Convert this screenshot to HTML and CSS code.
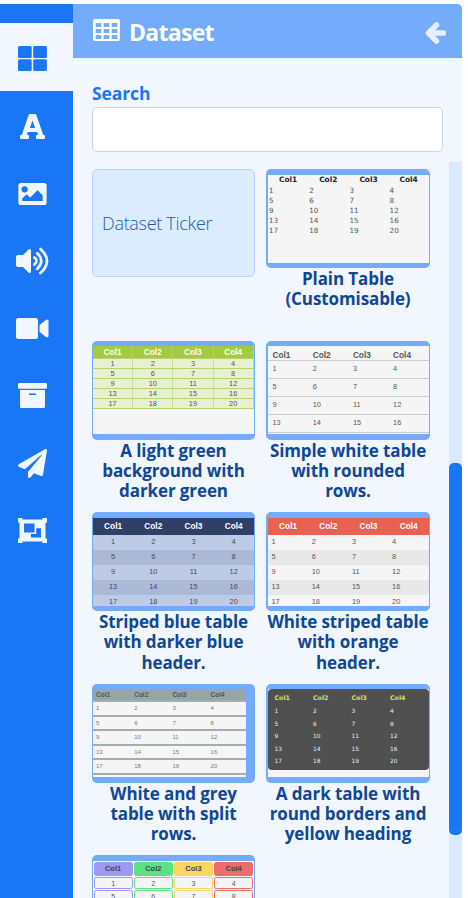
FILE: index.html
```html
<!DOCTYPE html>
<html lang="en">
<head>
<meta charset="utf-8">
<title>Dataset</title>
<link rel="stylesheet" href="styles.css">
</head>
<body>
<div class="app">
  <nav class="sidebar">
    <a class="item active"><svg width="29" height="25" viewBox="0 0 29 25"><rect width="13.7" height="12" rx="1.5"/><rect x="15.2" width="13.7" height="12" rx="1.5"/><rect y="13.2" width="13.7" height="11.8" rx="1.5"/><rect x="15.2" y="13.2" width="13.7" height="11.8" rx="1.5"/></svg></a>
    <a class="item"><svg width="25" height="25" viewBox="0 0 25 25"><path fill-rule="evenodd" d="M10 0h5q1 0 1.4 1l6.8 20H24q1 0 1 1v2q0 1-1 1h-7q-1 0-1-1v-2q0-1 1-1h1l-.8-3H7.800L7 21h1q1 0 1 1v2q0 1-1 1H1q-1 0-1-1v-2q0-1 1-1h.8L8.600 1Q9 0 10 0zm2.500 6.500L9.800 14h5.400z"/></svg></a>
    <a class="item"><svg width="29" height="22" viewBox="0 0 576 448"><path fill-rule="evenodd" d="M528 448H48c-26.500 0-48-21.500-48-48V48C0 21.500 21.500 0 48 0h480c26.500 0 48 21.500 48 48v352c0 26.500-21.500 48-48 48zM128 64a64 64 0 1 0 0 128 64 64 0 1 0 0-128zM80 368h416V256l-96-102c-5-5-12-5-17 0L240 300l-60-62c-5-5-12-5-17 0L80 312z"/></svg></a>
    <a class="item"><svg width="33" height="28" viewBox="0 0 33 28"><path d="M0 10q0-2 2-2h5l5.500-5.500Q15 1 15 4v20q0 3-2.500 1.500L7 20H2q-2 0-2-2z"/><g class="waves"><path d="M18.500 10.500q4 3.500 0 7M21.300 6.300q8 7.700 0 15.400M24.500 2q13 12 0 24"/></g></svg></a>
    <a class="item"><svg width="33" height="21" viewBox="0 0 33 21"><rect width="22" height="21" rx="2.500"/><path d="M23.500 7l6.500-5q2.500-1.300 2.500 1v15q0 2.300-2.500 1l-6.500-5z"/></svg></a>
    <a class="item"><svg width="29" height="25" viewBox="0 0 29 25"><rect width="29" height="5.700" rx="1.300"/><path fill-rule="evenodd" d="M2 7h25v16.500q0 1.500-1.500 1.500h-22Q2 25 2 23.500zm9.500 3.600q-.6 0-.6.700t.6.700h6q.6 0 .6-.7t-.6-.7z"/></svg></a>
    <a class="item"><svg width="29" height="29" viewBox="0 0 512 512"><path d="M476 3.200L12.500 270.600c-18.100 10.400-15.800 35.600 2.200 43.200L121 358.400l287.300-253.200c5.500-4.900 13.300 2.600 8.600 8.300L176 407v80.500c0 23.600 28.500 32.900 42.500 15.800L282 426l124.600 52.200c14.200 6 30.400-2.900 33-18.200l72-432C515 7.800 493.300-6.800 476 3.200z"/></svg></a>
    <a class="item"><svg width="29" height="25" viewBox="0 0 29 25"><path fill-rule="evenodd" d="M0 0h4.500v1.500h20V0H29v4.500h-1.500v16H29V25h-4.500v-1.500h-20V25H0v-4.500h1.500v-16H0zM6 5.500v9h10.500v-9zm12.200 4.800v5.700H13v3.500h10v-9.200z"/></svg></a>
  </nav>
  <main class="panel">
    <header class="header">
      <svg class="grid-icon" width="27" height="22" viewBox="0 0 27 22"><path fill-rule="evenodd" d="M2 0h23q2 0 2 2v18q0 2-2 2H2q-2 0-2-2V2Q0 0 2 0zm.700 4v4h5.600V4zm8 0v4h5.600V4zm8 0v4h5.600V4zm-16 6v4h5.600v-4zm8 0v4h5.600v-4zm8 0v4h5.600v-4zm-16 6v4h5.600v-4zm8 0v4h5.600v-4zm8 0v4h5.600v-4z"/></svg>
      <h1>Dataset</h1>
      <svg class="back" width="21" height="22" viewBox="0 0 21 22"><path d="M11.500 3L3.500 11l8 8"/><path d="M5 11h13.500"/></svg>
    </header>
    <section class="search"><label for="q">Search</label><input id="q"></section>
    <div class="scroll">
      <div class="cards" id="cards"><div class="card"><div class="ticker">Dataset Ticker</div></div></div>
      <div class="track"><div class="thumb"></div></div>
    </div>
  </main>
</div>
<script src="cards.js"></script>
</body>
</html>
```
FILE: styles.css
```css
* { box-sizing: border-box; }
body { margin: 0; background: #fdfdfd; font-family: "Open Sans", "Noto Sans", sans-serif; overflow: hidden; }
.app { display: flex; height: 898px; width: 462px; border-top: 4px solid #fff; }
.sidebar { width: 73px; background: #1976f7; padding-top: 19px; }
.item { display: flex; height: 67.4px; padding-right: 8px; align-items: center; justify-content: center; color: #f2f7ff; padding-top: 3px; }
.item svg { fill: currentColor; }
.item.active { background: #f2f7ff; color: #1976f7; height: 68px; }
.waves { fill: none; stroke: currentColor; stroke-width: 2.8; stroke-linecap: round; }
.panel { width: 389px; background: #f2f7ff; display: flex; flex-direction: column; }
.header { height: 54px; flex: none; background: #74abfa; border-top-right-radius: 5px; display: flex; align-items: center; padding: 0 16px 0 20px; color: #fff; }
.grid-icon { fill: #fff; margin-top: -2px; }
h1 { margin: 2px 0 0 9px; font-size: 23px; line-height: 30px; font-weight: 700; letter-spacing: -.7px; }
.back { margin-left: auto; margin-top: 3px; fill: none; stroke: #e4f0ff; stroke-width: 5.5; stroke-linecap: round; stroke-linejoin: round; }
.search { padding: 24px 19px 10px; height: 104px; flex: none; }
.search label { display: block; height: 25px; line-height: 23px; font-size: 17.5px; font-weight: 700; color: #1976f7; letter-spacing: -.1px; }
.search input { display: block; width: 351px; height: 45px; border: 1px solid #cdd4dc; border-radius: 5px; background: #fff; }
.scroll { flex: 1; min-height: 0; display: flex; justify-content: space-between; overflow: hidden; }
.cards { padding: 7px 0 0 19px; display: grid; grid-template-columns: 163px 164px; column-gap: 11px; grid-auto-rows: 171.5px; }
.track { width: 13px; background: #dbe9ff; padding-top: 301px; }
.thumb { height: 372px; border-radius: 5px; background: #1976f7; }
.ticker { height: 108px; border: 1px solid #b4d4fd; border-radius: 5px; background: #dbecff; color: #2459a8; font-size: 18px; font-weight: 350; line-height: 107px; padding-left: 9px; letter-spacing: -.3px; }
.preview { height: 99px; background: #74abfa; border-radius: 5px; padding: 5.500px 1px; overflow: hidden; }
.card:nth-child(even) .preview { padding-left: 2px; }
.canvas { height: 88px; background: #f5f5f5; overflow: hidden; font-family: "Liberation Sans", sans-serif; font-size: 7.4px; color: #555; }
.row { display: grid; grid-template-columns: repeat(4, 40.200px); align-items: center; height: var(--row); line-height: 8px; }
.row.head { height: var(--head); font-weight: 700; font-size: 8.300px; }
.label { margin: 1px -10px 0; font-size: 17px; line-height: 20.400px; font-weight: 700; color: #0f4796; text-align: center; white-space: nowrap; letter-spacing: -.1px; }
.plain { --head: 10.500px; --row: 10.100px; font-family: "DejaVu Sans", sans-serif; font-size: 7.200px; padding-top: .500px; }
.plain .head { font-size: 7.400px; color: #222; text-align: center; }
.plain .row:not(.head) { padding-left: 1px; }
.green { --head: 13px; --row: 10.100px; text-align: center; }
.green .row { background: #e8f0d2; border-bottom: 1px solid #b4d570; }
.green .head { background: #a5c940; color: #fff; }
.green span { border-right: 1px solid #c9dd9c; height: 100%; padding-top: .600px; }
.green .head span { border-color: #b5d65b; padding-top: 2px; }
.simple { --head: 14.500px; --row: 18.100px; }
.simple .row { border-bottom: 1px solid #ccc; padding-left: 4.500px; }
.simple .head { padding-top: 4px; }
.blue, .orange { --head: 17px; --row: 15.100px; }
.blue { text-align: center; color: #444a58; }
.blue .head { background: #2e4068; color: #fff; }
.blue .row:nth-child(even) { background: #becbe6; }
.blue .row:nth-child(odd):not(.head) { background: #abb8d6; }
.orange .head { background: #ea6053; color: #fff; text-align: center; }
.orange .row:not(.head) { padding-left: 3.500px; }
.orange .row:nth-child(odd):not(.head) { background: #e8e8e8; }
.grey { --head: 13px; --row: 14.500px; width: 153px; font-size: 6px; color: #777; }
.grey .row { grid-template-columns: repeat(4, 38.200px); padding-left: 3px; border-bottom: 2px solid #a1afaf; }
.grey .head { background: #96a5a5; color: #4e5757; font-size: 6.500px; }
.dark { --head: 14px; --row: 12.500px; font-family: "DejaVu Sans", sans-serif; font-size: 5.900px; }
.dark .sheet { background: #505050; color: #eee; border-radius: 4px; height: 81px; padding: 2px 0 0 6.500px; }
.dark .row { grid-template-columns: repeat(4, 38.500px); }
.dark .head { color: #dce05d; font-size: 6.300px; }
.pills { --head: 14.500px; --row: 13.700px; padding-top: 1px; text-align: center; font-size: 7px; }
.pills .row span { margin: 0 .5px; height: 12.700px; border: 1px solid var(--tint); border-radius: 2.500px; padding-top: 2px; }
.pills .head span { height: 13.500px; background: var(--tint); color: #444; font-size: 7.500px; }
.pills span:nth-child(1) { --tint: #9f98f5; }
.pills span:nth-child(2) { --tint: #5ce285; }
.pills span:nth-child(3) { --tint: #fbd75f; }
.pills span:nth-child(4) { --tint: #ef6a6a; }
```
FILE: cards.js
```js
const cards = [
  ["plain", "Plain Table<br>(Customisable)", 5],
  ["green", "A light green<br>background with<br>darker green", 5],
  ["simple", "Simple white table<br>with rounded<br>rows.", 4],
  ["blue", "Striped blue table<br>with darker blue<br>header.", 5],
  ["orange", "White striped table<br>with orange<br>header.", 5],
  ["grey", "White and grey<br>table with split<br>rows.", 5],
  ["dark", "A dark table with<br>round borders and<br>yellow heading", 5],
  ["pills", "", 2]
];
const row = (values, head) => `<div class="row${head ? " head" : ""}">${values.map(v => `<span>${v}</span>`).join("")}</div>`;
const table = count => {
  let rows = row(["Col1", "Col2", "Col3", "Col4"], true);
  for (let i = 0; i < count; i++) rows += row([1, 2, 3, 4].map(c => i * 4 + c));
  return rows;
};
document.getElementById("cards").insertAdjacentHTML("beforeend", cards.map(([theme, label, count]) =>
  `<article class="card"><div class="preview"><div class="canvas ${theme}"><div class="sheet">${table(count)}</div></div></div><div class="label">${label}</div></article>`
).join(""));
```
